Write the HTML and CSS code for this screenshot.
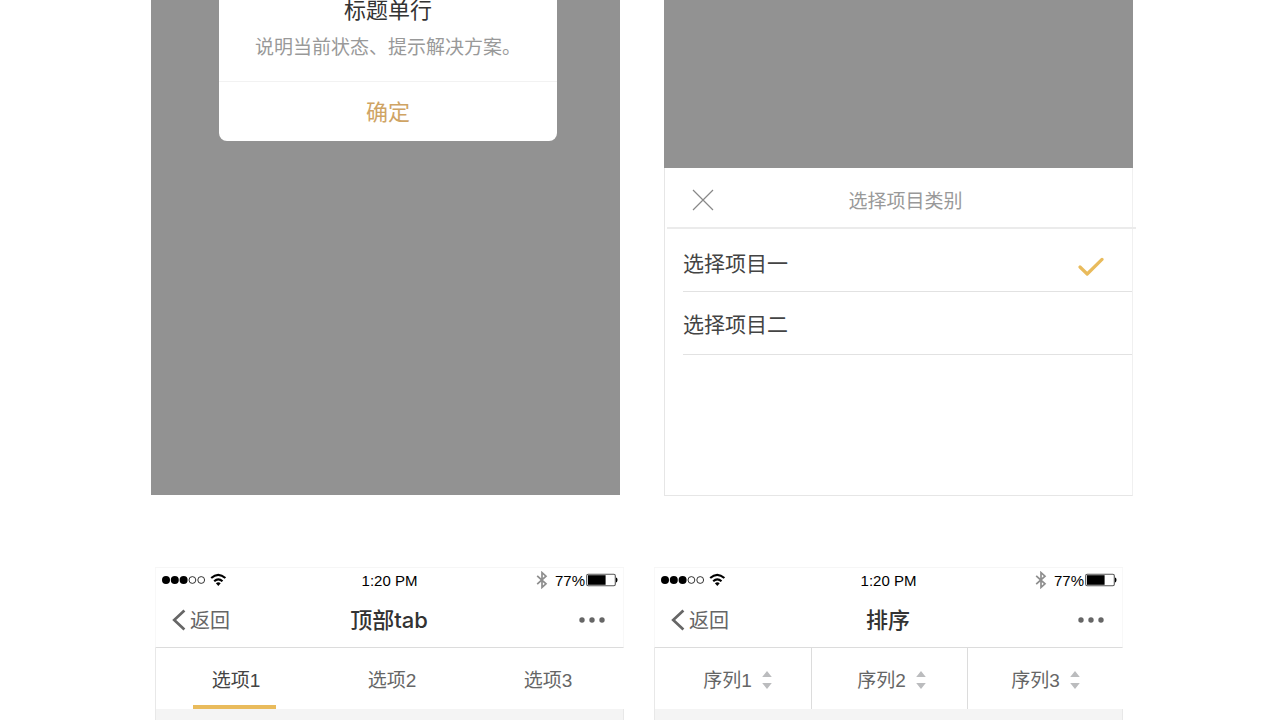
FILE: index.html
```html
<!DOCTYPE html>
<html lang="zh-CN">
<head>
<meta charset="utf-8">
<meta name="viewport" content="width=device-width, initial-scale=1">
<title>移动端组件</title>
<link rel="stylesheet" href="styles.css">
</head>
<body>
<svg class="defs" aria-hidden="true">
  <symbol id="signal" viewBox="0 0 66 14">
    <circle cx="5" cy="7" r="4"/><circle cx="13.8" cy="7" r="4"/><circle cx="22.6" cy="7" r="4"/>
    <g fill="none" stroke="#000" stroke-width=".8"><circle cx="31.4" cy="7" r="3.4"/><circle cx="40.2" cy="7" r="3.4"/></g>
    <g fill="none" stroke="#000" stroke-width="2.1"><path d="M50.2 5.1Q57.2-1.5 64.4 5.1"/><path d="M53.2 8.3Q57.3 4.3 61.5 8.3"/></g>
    <path d="M54.9 10.2Q57.3 8.2 59.7 10.2L57.3 13z"/>
  </symbol>
  <symbol id="bluetooth" viewBox="0 0 12 18">
    <path d="M1.2 4.8L10 12.8 6 16.4V1.6L10 5.2 1.2 13.2" fill="none" stroke="#8e8e8e" stroke-width="1.7"/>
  </symbol>
  <symbol id="battery" viewBox="0 0 32 14">
    <rect x=".7" y="1.2" width="28.6" height="11.6" rx="1.5" fill="#fff" stroke="#555" stroke-width="1.1"/>
    <path d="M2 2.2h17.6v9.6H2z"/><path d="M30 4.8h.8q1.4 2.2 0 4.4H30z"/>
  </symbol>
  <symbol id="chevron" viewBox="0 0 14 22">
    <path d="M12.4 1.4L2.2 11l10.2 9.6" fill="none" stroke="#666" stroke-width="2.7"/>
  </symbol>
  <symbol id="more" viewBox="0 0 28 8">
    <circle cx="4" cy="4" r="2.7"/><circle cx="14" cy="4" r="2.7"/><circle cx="24" cy="4" r="2.7"/>
  </symbol>
  <symbol id="sort" viewBox="0 0 10 18">
    <path d="M5 0l4.8 6H.2zM5 18l4.8-6H.2z"/>
  </symbol>
</svg>

<main>
  <div class="row row-overlays">
    <section class="screen dimmed">
      <div class="dialog" role="dialog" aria-labelledby="dialog-title">
        <h2 class="dialog-title" id="dialog-title">标题单行</h2>
        <p class="dialog-text">说明当前状态、提示解决方案。</p>
        <button class="dialog-button" type="button">确定</button>
      </div>
    </section>

    <section class="screen sheet-screen">
      <div class="backdrop"></div>
      <form class="sheet">
        <header class="sheet-header">
          <h2 class="sheet-title">选择项目类别</h2>
          <button class="close" type="button" aria-label="关闭">
            <svg width="22" height="22" viewBox="0 0 22 22" fill="none" stroke="#888" stroke-width="1.2"><path d="M1 1l20 20M21 1L1 21"/></svg>
          </button>
        </header>
        <div class="options">
          <label class="option option-first">
            <input class="option-input" type="radio" name="project" checked>
            <span>选择项目一</span>
            <svg class="check" width="26" height="20" viewBox="0 0 26 20" fill="none" stroke="#e9bb5c" stroke-width="3.2" stroke-linecap="round" stroke-linejoin="round"><path d="M2 10l7.2 7L24 2.4"/></svg>
          </label>
          <label class="option">
            <input class="option-input" type="radio" name="project">
            <span>选择项目二</span>
            <svg class="check" width="26" height="20" viewBox="0 0 26 20" fill="none" stroke="#e9bb5c" stroke-width="3.2" stroke-linecap="round" stroke-linejoin="round"><path d="M2 10l7.2 7L24 2.4"/></svg>
          </label>
        </div>
      </form>
    </section>
  </div>

  <div class="row row-navs">
    <section class="screen phone">
      <div class="status">
        <svg class="signal" width="66" height="14"><use href="#signal"/></svg>
        <span class="time">1:20 PM</span>
        <div class="power">
          <svg width="12" height="18"><use href="#bluetooth"/></svg>
          <span>77%</span>
          <svg class="battery" width="32" height="14"><use href="#battery"/></svg>
        </div>
      </div>
      <header class="nav">
        <button class="back" type="button"><svg width="14" height="22"><use href="#chevron"/></svg>返回</button>
        <h2 class="nav-title">顶部tab</h2>
        <button class="more" type="button" aria-label="更多"><svg width="28" height="8"><use href="#more"/></svg></button>
      </header>
      <div class="tabs" role="tablist">
        <button class="tab tab-active" type="button" role="tab" aria-selected="true">选项1</button>
        <button class="tab" type="button" role="tab" aria-selected="false">选项2</button>
        <button class="tab" type="button" role="tab" aria-selected="false">选项3</button>
      </div>
      <div class="content"></div>
    </section>

    <section class="screen phone">
      <div class="status">
        <svg class="signal" width="66" height="14"><use href="#signal"/></svg>
        <span class="time">1:20 PM</span>
        <div class="power">
          <svg width="12" height="18"><use href="#bluetooth"/></svg>
          <span>77%</span>
          <svg class="battery" width="32" height="14"><use href="#battery"/></svg>
        </div>
      </div>
      <header class="nav">
        <button class="back" type="button"><svg width="14" height="22"><use href="#chevron"/></svg>返回</button>
        <h2 class="nav-title">排序</h2>
        <button class="more" type="button" aria-label="更多"><svg width="28" height="8"><use href="#more"/></svg></button>
      </header>
      <div class="tabs sorts">
        <button class="tab sort" type="button">序列1<svg class="sort-icon" width="10" height="18"><use href="#sort"/></svg></button>
        <button class="tab sort" type="button">序列2<svg class="sort-icon" width="10" height="18"><use href="#sort"/></svg></button>
        <button class="tab sort" type="button">序列3<svg class="sort-icon" width="10" height="18"><use href="#sort"/></svg></button>
      </div>
      <div class="content"></div>
    </section>
  </div>
</main>
</body>
</html>
```
FILE: styles.css
```css
* { box-sizing: border-box; }

body {
  margin: 0;
  background: #fff;
  color: #333;
  font-family: "Liberation Sans", "Noto Sans CJK SC", sans-serif;
  overflow: hidden;
}

h2, p { margin: 0; font-weight: 400; }

button {
  margin: 0;
  padding: 0;
  border: 0;
  background: none;
  color: inherit;
  font: inherit;
  cursor: pointer;
}

svg { display: block; flex: none; }
.defs { position: absolute; width: 0; height: 0; }

.row {
  display: grid;
  grid-template-columns: repeat(2, minmax(0, 1fr));
}
.row-overlays { gap: 44px; padding: 0 147px 0 151px; }
.row-navs { gap: 30px; padding: 0 157px 0 155px; margin-top: 71px; }

/* Alert dialog */
.dimmed {
  align-self: start;
  min-height: 495px;
  padding: 0 63px 0 68px;
  background: #929292;
}
.dialog {
  overflow: hidden;
  border-radius: 0 0 8px 8px;
  background: #fff;
  text-align: center;
}
.dialog-title { font-size: 22px; line-height: 22px; }
.dialog-text {
  padding: 11px 0 19px;
  color: #999;
  font-size: 19px;
  line-height: 29px;
  white-space: nowrap;
}
.dialog-button {
  width: 100%;
  height: 60px;
  padding-bottom: 4px;
  border-top: 1px solid #f2f2f2;
  color: #cfa464;
  font-size: 22px;
}

/* Bottom sheet */
.sheet-screen { display: flex; flex-direction: column; }
.backdrop { height: 168px; background: #929292; }
.sheet {
  flex: 1;
  min-height: 328px;
  border: 1px solid #e6e6e6;
  border-right-color: #f0f0f0;
  border-top: 0;
}
.sheet-header {
  display: grid;
  align-items: center;
  height: 61px;
  margin: 0 -4px 0 2px;
  border-bottom: 2px solid #ebebeb;
}
.sheet-title, .close { grid-area: 1 / 1; }
.sheet-title {
  padding: 4px 0 0 8px;
  color: #999;
  font-size: 19px;
  text-align: center;
}
.close { justify-self: start; margin: 4px 0 0 25px; }
.options { padding-left: 18px; }
.option {
  display: flex;
  align-items: center;
  justify-content: space-between;
  height: 63px;
  padding-right: 28px;
  border-bottom: 1px solid #e2e2e2;
  color: #444;
  font-size: 21px;
  cursor: pointer;
}
.option-first { padding-top: 3px; }
.option-input { position: absolute; opacity: 0; }
.check { visibility: hidden; margin-top: 10px; }
.option-input:checked ~ .check { visibility: visible; }

/* Phone header */
.phone { border-top: 1px solid #f6f6f6; }
.status {
  display: grid;
  grid-template-columns: 1fr auto 1fr;
  align-items: center;
  height: 24px;
  padding: 0 5px;
  border-right: 1px solid #f8f8f8;
  border-left: 1px solid #f8f8f8;
  color: #000;
  font-size: 15px;
}
.power { display: flex; align-items: center; justify-content: flex-end; }
.power span { margin: 0 1px 0 7px; }
.nav {
  display: grid;
  grid-template-columns: 1fr auto 1fr;
  align-items: center;
  height: 56px;
  padding: 0 17px 0 16px;
  border: 1px solid #f8f8f8;
  border-top: 0;
  border-bottom-color: #dcdcdc;
}
.back {
  display: flex;
  align-items: center;
  gap: 4px;
  justify-self: start;
  color: #666;
  font-size: 20px;
}
.nav-title {
  padding-bottom: 4px;
  font-family: Inter, "Noto Sans CJK SC", sans-serif;
  font-size: 22px;
  font-weight: 500;
}
.more { justify-self: end; fill: #666; }

/* Tabs and sort bar */
.tabs {
  display: grid;
  grid-template-columns: repeat(3, 1fr);
  height: 61px;
  border-left: 1px solid #e8e8e8;
}
.tab {
  position: relative;
  padding-left: 4px;
  color: #666;
  font-size: 19px;
}
.tab-active { color: #444; }
.tab-active::after {
  content: "";
  position: absolute;
  bottom: 0;
  left: 24%;
  width: 53%;
  height: 4px;
  background: #e9bb5c;
}
.sort {
  display: flex;
  align-items: center;
  justify-content: center;
  gap: 10px;
  border-left: 1px solid #dcdcdc;
}
.sort:first-child { padding-left: 9px; border-left: 0; }
.sort:last-child { padding-left: 0; }
.sort-icon { margin-top: 2px; fill: #bbbcbe; }
.content {
  height: 40px;
  border: 1px solid #e8e8e8;
  border-width: 0 1px;
  background: #f4f4f4;
}
```
